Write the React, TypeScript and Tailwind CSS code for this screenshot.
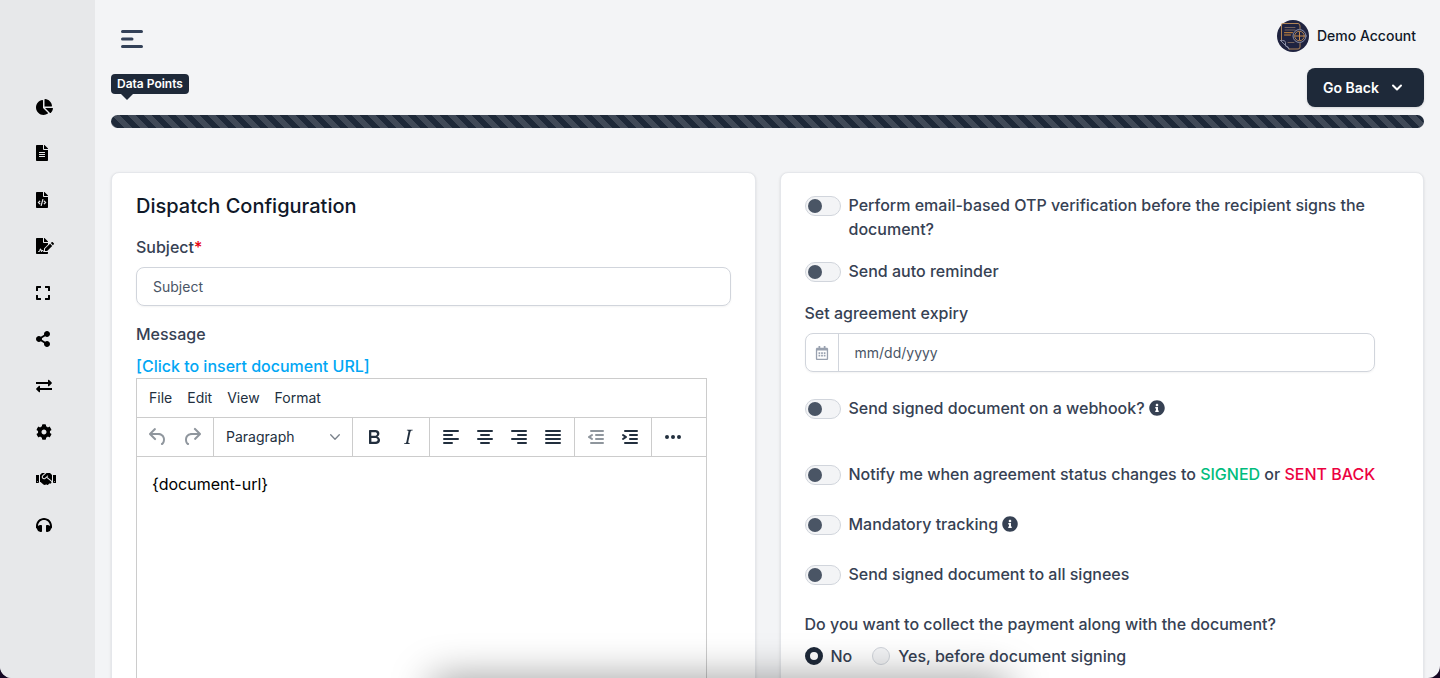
import { useState } from 'react';
import type { ReactNode } from 'react';
import {
  FaChartPie,
  FaCog,
  FaExpand,
  FaFileAlt,
  FaFileCode,
  FaFileSignature,
  FaHandshake,
  FaHeadphones,
  FaInfoCircle,
  FaRegCalendarAlt,
  FaShareAlt,
} from 'react-icons/fa';

function TransferIcon({ className }: { className?: string }) {
  return (
    <svg viewBox="0 0 16 16" className={className} fill="currentColor">
      <path d="M0 4h12V2.2c0-.5.6-.7.9-.4l2.8 2.7c.3.3.3.7 0 1l-2.8 2.7c-.3.3-.9.1-.9-.4V6H0V4Z" />
      <path d="M16 10H4V8.2c0-.5-.6-.7-.9-.4L.3 10.5c-.3.3-.3.7 0 1l2.8 2.7c.3.3.9.1.9-.4V12h12v-2Z" />
    </svg>
  );
}

const navItems = [
  { label: 'Dashboard', icon: FaChartPie, width: 'w-[17px]' },
  { label: 'Documents', icon: FaFileAlt, width: 'w-3' },
  { label: 'Templates', icon: FaFileCode, width: 'w-3' },
  { label: 'Agreements', icon: FaFileSignature, width: 'w-[18px]' },
  { label: 'Scan', icon: FaExpand, width: 'w-[14px]' },
  { label: 'Share', icon: FaShareAlt, width: 'w-[14px]' },
  { label: 'Transfers', icon: TransferIcon, width: 'w-4' },
  { label: 'Settings', icon: FaCog, width: 'w-4' },
  { label: 'Partners', icon: FaHandshake, width: 'w-5' },
  { label: 'Support', icon: FaHeadphones, width: 'w-4' },
];

const icons = {
  undo: 'M6.4 8H12c3.7 0 6.2 2 6.8 5.1.6 2.7-.4 5.6-2.3 6.8a1 1 0 0 1-1-1.8c1.1-.6 1.8-2.7 1.4-4.6-.5-2.1-2.1-3.5-4.9-3.5H6.4l3.3 3.3a1 1 0 1 1-1.4 1.4l-5-5a1 1 0 0 1 0-1.4l5-5a1 1 0 0 1 1.4 1.4L6.4 8Z',
  redo: 'M17.6 10H12c-2.8 0-4.4 1.4-4.9 3.5-.4 2 .3 4 1.4 4.6a1 1 0 1 1-1 1.8c-2-1.2-2.9-4.1-2.3-6.8.6-3 3-5.1 6.8-5.1h5.6l-3.3-3.3a1 1 0 1 1 1.4-1.4l5 5a1 1 0 0 1 0 1.4l-5 5a1 1 0 0 1-1.4-1.4l3.3-3.3Z',
  bold: 'M7.8 19c-.3 0-.5 0-.6-.2l-.2-.5V5.7c0-.2 0-.4.2-.5l.6-.2h5c1.5 0 2.7.3 3.5 1 .7.6 1.1 1.4 1.1 2.5a3 3 0 0 1-.6 1.9c-.4.6-1 1-1.6 1.2.4.1.9.3 1.3.6s.8.7 1 1.2c.4.4.5 1 .5 1.6 0 1.3-.4 2.3-1.3 3-.8.7-2.1 1-3.8 1H7.8Zm5-8.3c.6 0 1.2-.1 1.6-.5.4-.3.6-.7.6-1.3 0-1.1-.8-1.7-2.3-1.7H9.3v3.5h3.4Zm.5 6c.7 0 1.3-.1 1.7-.4.4-.4.6-.9.6-1.5s-.2-1-.7-1.4c-.4-.3-1-.4-2-.4H9.4v3.8h4Z',
  italic: 'm16.7 4.7-.1.9h-.3c-.6 0-1 0-1.4.3-.3.3-.4.6-.5 1.1l-2.1 9.8v.6c0 .5.4.8 1.4.8h.2l-.2.8H8l.2-.8h.2c1.1 0 1.8-.5 2-1.5l2-9.8.1-.5c0-.6-.4-.8-1.4-.8h-.3l.2-.9h5.8Z',
  left: 'M5 5h14a1 1 0 0 1 0 2H5a1 1 0 1 1 0-2Zm0 4h8a1 1 0 0 1 0 2H5a1 1 0 1 1 0-2Zm0 8h8a1 1 0 0 1 0 2H5a1 1 0 0 1 0-2Zm0-4h14a1 1 0 0 1 0 2H5a1 1 0 0 1 0-2Z',
  center: 'M5 5h14a1 1 0 0 1 0 2H5a1 1 0 1 1 0-2Zm3 4h8a1 1 0 0 1 0 2H8a1 1 0 1 1 0-2Zm0 8h8a1 1 0 0 1 0 2H8a1 1 0 0 1 0-2Zm-3-4h14a1 1 0 0 1 0 2H5a1 1 0 0 1 0-2Z',
  right: 'M5 5h14a1 1 0 0 1 0 2H5a1 1 0 1 1 0-2Zm6 4h8a1 1 0 0 1 0 2h-8a1 1 0 0 1 0-2Zm0 8h8a1 1 0 0 1 0 2h-8a1 1 0 0 1 0-2Zm-6-4h14a1 1 0 0 1 0 2H5a1 1 0 0 1 0-2Z',
  justify: 'M5 5h14a1 1 0 0 1 0 2H5a1 1 0 1 1 0-2Zm0 4h14a1 1 0 0 1 0 2H5a1 1 0 1 1 0-2Zm0 4h14a1 1 0 0 1 0 2H5a1 1 0 0 1 0-2Zm0 4h14a1 1 0 0 1 0 2H5a1 1 0 0 1 0-2Z',
  outdent: 'M7 5h12a1 1 0 0 1 0 2H7a1 1 0 1 1 0-2Zm5 4h7a1 1 0 0 1 0 2h-7a1 1 0 0 1 0-2Zm0 4h7a1 1 0 0 1 0 2h-7a1 1 0 0 1 0-2Zm-5 4h12a1 1 0 0 1 0 2H7a1 1 0 0 1 0-2Zm1.6-3.8a1 1 0 0 1-1.2 1.6l-3-2a1 1 0 0 1 0-1.6l3-2a1 1 0 0 1 1.2 1.6L6.8 12l1.8 1.2Z',
  indent: 'M7 5h12a1 1 0 0 1 0 2H7a1 1 0 1 1 0-2Zm5 4h7a1 1 0 0 1 0 2h-7a1 1 0 0 1 0-2Zm0 4h7a1 1 0 0 1 0 2h-7a1 1 0 0 1 0-2Zm-5 4h12a1 1 0 0 1 0 2H7a1 1 0 0 1 0-2Zm-2.6-3.8L6.2 12l-1.8-1.2a1 1 0 0 1 1.2-1.6l3 2a1 1 0 0 1 0 1.6l-3 2a1 1 0 1 1-1.2-1.6Z',
  more: 'M6 10a2 2 0 1 0 0 4 2 2 0 0 0 0-4Zm6 0a2 2 0 1 0 0 4 2 2 0 0 0 0-4Zm6 0a2 2 0 1 0 0 4 2 2 0 0 0 0-4Z',
};

function ToolButton({ icon, label, disabled }: { icon: keyof typeof icons; label: string; disabled?: boolean }) {
  return (
    <button
      type="button"
      aria-label={label}
      disabled={disabled}
      className="flex h-7 w-[34px] items-center justify-center rounded-sm text-[#222f3e] hover:bg-gray-100 disabled:opacity-50"
    >
      <svg viewBox="0 0 24 24" className="size-6" fill="currentColor" fillRule="evenodd">
        <path d={icons[icon]} />
      </svg>
    </button>
  );
}

function ToolGroup({ children, last }: { children: ReactNode; last?: boolean }) {
  return (
    <div className={`flex items-center px-1 ${last ? '' : 'border-r border-[#cccccc]'}`}>{children}</div>
  );
}

function Editor() {
  return (
    <div className="mr-6 border border-[#cccccc]">
      <div className="flex h-[39px] items-center gap-[15px] border-b border-[#cccccc] px-3 text-sm text-[#222f3e]">
        <button type="button">File</button>
        <button type="button">Edit</button>
        <button type="button">View</button>
        <button type="button">Format</button>
      </div>
      <div className="flex h-[39px] border-b border-[#cccccc]">
        <ToolGroup>
          <ToolButton icon="undo" label="Undo" disabled />
          <ToolButton icon="redo" label="Redo" disabled />
        </ToolGroup>
        <ToolGroup>
          <button
            type="button"
            className="flex h-7 w-[130px] items-center justify-between px-2 text-sm text-[#222f3e]"
          >
            Paragraph
            <svg viewBox="0 0 10 10" className="size-[10px] opacity-60" fill="none" stroke="currentColor" strokeWidth="1.3" strokeLinecap="round" strokeLinejoin="round">
              <path d="m.7 2.7 4.3 4.500 4.300-4.500" />
            </svg>
          </button>
        </ToolGroup>
        <ToolGroup>
          <ToolButton icon="bold" label="Bold" />
          <ToolButton icon="italic" label="Italic" />
        </ToolGroup>
        <ToolGroup>
          <ToolButton icon="left" label="Align left" />
          <ToolButton icon="center" label="Align center" />
          <ToolButton icon="right" label="Align right" />
          <ToolButton icon="justify" label="Justify" />
        </ToolGroup>
        <ToolGroup>
          <ToolButton icon="outdent" label="Decrease indent" disabled />
          <ToolButton icon="indent" label="Increase indent" />
        </ToolGroup>
        <ToolGroup last>
          <ToolButton icon="more" label="More" />
        </ToolGroup>
      </div>
      <textarea
        id="message"
        defaultValue="{document-url}"
        className="block h-80 w-full resize-none p-[15px] text-base text-black outline-none"
      />
    </div>
  );
}

function Toggle({ id, className, children }: { id: string; className?: string; children: ReactNode }) {
  return (
    <div className={`flex items-start gap-2 ${className ?? ''}`}>
      <input
        id={id}
        type="checkbox"
        role="switch"
        className="mt-[3px] flex h-5 w-9 shrink-0 appearance-none items-center rounded-full border border-gray-300 bg-gray-100 px-[2px] before:size-[14px] before:rounded-full before:bg-gray-600 before:content-[''] checked:justify-end checked:bg-gray-300"
      />
      <label htmlFor={id}>{children}</label>
    </div>
  );
}

function InfoIcon() {
  return <FaInfoCircle className="mb-[3px] ml-1 inline size-4" />;
}

function Avatar() {
  return (
    <svg viewBox="0 0 32 32" className="size-8" fill="none" strokeLinecap="round">
      <circle cx="16" cy="16" r="16" fill="#1f2340" />
      <path d="M4.500 21V4.500Q4.500 3.500 5.500 3.500H21Q23 3.500 23 6v3" stroke="#b08355" strokeWidth="1" />
      <path d="M23 23v4q0 2-2 2H12" stroke="#b08355" strokeWidth="1" />
      <path d="M3.500 20.500q5-.5 5 2v3.500q3 0 3.500 2.800M3.500 20.500l8.500 8.300" stroke="#8b8fa6" strokeWidth="1" />
      <path d="M8 7.500h10M8 10h10M11 22.500h6" stroke="#8a7263" strokeWidth=".8" />
      <path d="M7.500 12.700h8M7.500 15h6" stroke="#d18c3c" strokeWidth="1" />
      <circle cx="22.500" cy="16" r="6.500" fill="#1f2340" stroke="#8b8fa6" strokeWidth="1" />
      <circle cx="22.500" cy="16" r="4.800" stroke="#b08355" strokeWidth="1" />
      <path d="M22.500 12v8M18.500 16h8" stroke="#c78b4b" strokeWidth="1" />
    </svg>
  );
}

export default function App() {
  const [subject, setSubject] = useState('');
  const [payment, setPayment] = useState('no');

  const radioClass =
    'size-[18px] appearance-none rounded-full border border-gray-300 bg-gray-100 checked:border-[5px] checked:border-gray-800 checked:bg-white';

  return (
    <div className="h-screen bg-[#160824] font-['Inter',sans-serif]">
      <div className="relative flex h-full overflow-hidden rounded-b-xl bg-gray-100 text-gray-700">
        <aside className="w-[95px] shrink-0 bg-[#e7e8ea] pt-[99px] pl-9 text-black">
          <nav className="flex h-[434px] flex-col justify-between">
            {navItems.map(({ label, icon: Icon, width }) => (
              <a key={label} href="#" aria-label={label} className="flex h-4">
                <Icon className={`h-4 ${width}`} />
              </a>
            ))}
          </nav>
        </aside>

        <main className="min-w-0 flex-1 px-4">
          <header className="flex h-[68px] items-center justify-between pt-1 pr-2 pl-[10px]">
            <button type="button" aria-label="Toggle sidebar" className="mt-[6px]">
              <svg viewBox="0 0 22 18" className="h-[18px] w-[22px]" stroke="#334158" strokeWidth="3" strokeLinecap="round">
                <path d="M1.500 1.500h19M1.500 9h9.500M1.500 16.500h19" />
              </svg>
            </button>
            <button type="button" className="flex items-center gap-2 text-sm font-medium text-gray-900">
              <Avatar />
              Demo Account
            </button>
          </header>

          <div className="flex items-start justify-between pb-2">
            <div className="relative mt-[6px] rounded-sm bg-gray-800 px-[6px] text-xs leading-5 font-semibold text-white">
              Data Points
              <span className="absolute top-full left-[10px] border-x-[6px] border-t-[6px] border-x-transparent border-t-gray-800" />
            </div>
            <button
              type="button"
              className="flex h-[39px] items-center gap-3 rounded-lg bg-gray-800 pr-[21px] pl-4 text-sm font-semibold text-white shadow-sm"
            >
              Go Back
              <svg viewBox="0 0 12 12" className="size-3" fill="none" stroke="currentColor" strokeWidth="2" strokeLinecap="round" strokeLinejoin="round">
                <path d="m2 3.500 4 4 4-4" />
              </svg>
            </button>
          </div>

          <div className="h-[13px] rounded-full bg-gray-800 bg-[linear-gradient(45deg,rgba(255,255,255,0.15)_25%,transparent_25%,transparent_50%,rgba(255,255,255,0.15)_50%,rgba(255,255,255,0.15)_75%,transparent_75%,transparent)] bg-[length:16px_16px]" />

          <div className="mt-11 grid grid-cols-2 gap-6 font-medium">
            <section className="rounded-lg border border-gray-200 bg-white px-6 py-5 shadow-sm">
              <h2 className="mb-4 text-xl leading-[26px] text-gray-900">Dispatch Configuration</h2>
              <label htmlFor="subject" className="mb-2 block">
                Subject<span className="text-[#e7000b]">*</span>
              </label>
              <input
                id="subject"
                value={subject}
                onChange={(e) => setSubject(e.target.value)}
                placeholder="Subject"
                className="mb-4 block h-[39px] w-full rounded-lg border border-gray-300 px-4 text-sm font-normal shadow-xs outline-none placeholder:text-gray-600"
              />
              <label htmlFor="message" className="mb-2 block">
                Message
              </label>
              <a href="#" className="block w-fit text-sky-500">
                [Click to insert document URL]
              </a>
              <div className="font-normal">
                <Editor />
              </div>
            </section>

            <section className="rounded-lg border border-gray-200 bg-white py-5 pr-12 pl-6 shadow-sm">
              <Toggle id="otp" className="mb-[18px]">
                Perform email-based OTP verification before the recipient signs the document?
              </Toggle>
              <Toggle id="reminder" className="mb-[18px]">
                Send auto reminder
              </Toggle>
              <label htmlFor="expiry" className="mb-2 block">
                Set agreement expiry
              </label>
              <div className="mb-6 flex h-[39px] rounded-lg border border-gray-300 shadow-xs">
                <span className="flex w-[33px] items-center justify-center border-r border-gray-300 text-gray-400">
                  <FaRegCalendarAlt className="size-[14px]" />
                </span>
                <input
                  id="expiry"
                  placeholder="mm/dd/yyyy"
                  className="min-w-0 flex-1 px-4 text-sm font-normal outline-none placeholder:text-gray-600"
                />
              </div>
              <Toggle id="webhook" className="mb-[42px]">
                Send signed document on a webhook?
                <InfoIcon />
              </Toggle>
              <Toggle id="notify" className="mb-[26px] xl:whitespace-nowrap">
                Notify me when agreement status changes to <span className="text-emerald-500">SIGNED</span> or{' '}
                <span className="text-rose-600">SENT BACK</span>
              </Toggle>
              <Toggle id="tracking" className="mb-[26px]">
                Mandatory tracking
                <InfoIcon />
              </Toggle>
              <Toggle id="signees" className="mb-[26px]">
                Send signed document to all signees
              </Toggle>
              <fieldset>
                <legend className="mb-2">Do you want to collect the payment along with the document?</legend>
                <div className="flex items-center gap-5">
                  <label className="flex items-center gap-2">
                    <input
                      type="radio"
                      name="payment"
                      checked={payment === 'no'}
                      onChange={() => setPayment('no')}
                      className={radioClass}
                    />
                    No
                  </label>
                  <label className="flex items-center gap-2">
                    <input
                      type="radio"
                      name="payment"
                      checked={payment === 'before'}
                      onChange={() => setPayment('before')}
                      className={radioClass}
                    />
                    Yes, before document signing
                  </label>
                </div>
              </fieldset>
            </section>
          </div>
        </main>

        <div className="pointer-events-none absolute inset-x-[30%] top-full h-10 shadow-[0_0_40px_rgba(0,0,0,0.4)]" />
      </div>
    </div>
  );
}
